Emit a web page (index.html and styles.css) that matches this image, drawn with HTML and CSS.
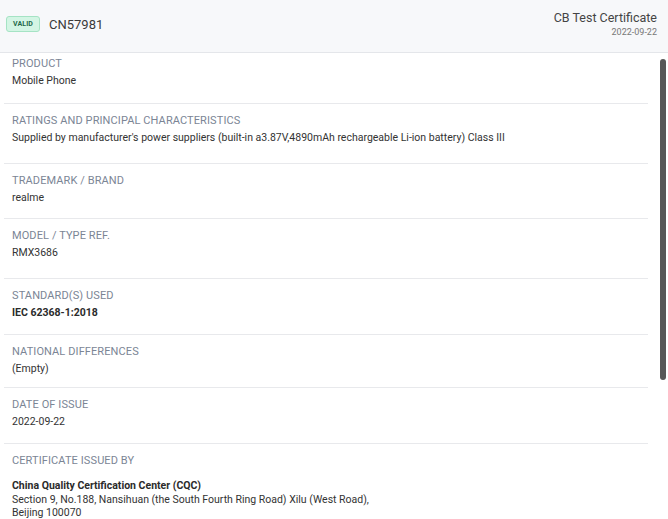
FILE: index.html
```html
<!DOCTYPE html>
<html>
<head>
<meta charset="utf-8">
<link rel="stylesheet" href="styles.css">
</head>
<body>
<div class="panel">
  <header class="head">
    <div class="head-left">
      <span class="badge">VALID</span>
      <span class="cert-no">CN57981</span>
    </div>
    <div class="head-right">
      <div class="cert-type">CB Test Certificate</div>
      <div class="cert-date">2022-09-22</div>
    </div>
  </header>
  <div class="body">
    <div class="list">
      <div class="row first pb-13">
        <div class="label">PRODUCT</div>
        <div class="value">Mobile Phone</div>
      </div>
      <div class="row pb-16">
        <div class="label">RATINGS AND PRINCIPAL CHARACTERISTICS</div>
        <div class="value">Supplied by manufacturer's power suppliers (built-in a3.87V,4890mAh rechargeable Li-ion battery) Class III</div>
      </div>
      <div class="row pb-11">
        <div class="label">TRADEMARK / BRAND</div>
        <div class="value">realme</div>
      </div>
      <div class="row pb-16">
        <div class="label">MODEL / TYPE REF.</div>
        <div class="value">RMX3686</div>
      </div>
      <div class="row pb-12">
        <div class="label">STANDARD(S) USED</div>
        <div class="value strong">IEC 62368-1:2018</div>
      </div>
      <div class="row pb-9">
        <div class="label">NATIONAL DIFFERENCES</div>
        <div class="value">(Empty)</div>
      </div>
      <div class="row pb-12">
        <div class="label">DATE OF ISSUE</div>
        <div class="value">2022-09-22</div>
      </div>
      <div class="row last">
        <div class="label">CERTIFICATE ISSUED BY</div>
        <div class="issuer">
          <div class="strong">China Quality Certification Center (CQC)</div>
          <div>Section 9, No.188, Nansihuan (the South Fourth Ring Road) Xilu (West Road),</div>
          <div>Beijing 100070</div>
        </div>
      </div>
    </div>
    <div class="thumb"></div>
  </div>
</div>
</body>
</html>
```

FILE: styles.css
```css
* { box-sizing: border-box; }
html, body {
  margin: 0;
  padding: 0;
  background: #ffffff;
  font-family: Roboto, "Liberation Sans", Arial, sans-serif;
  color: #333333;
}
.panel {
  width: 668px;
  height: 519px;
  overflow: hidden;
  display: flex;
  flex-direction: column;
}
.head {
  height: 53px;
  flex: none;
  background: #f7f8fa;
  border-bottom: 1px solid #e4e6ea;
  display: flex;
  justify-content: space-between;
  align-items: flex-start;
  padding: 0 11px 0 6px;
}
.head-left {
  display: flex;
  align-items: center;
  gap: 9px;
  height: 48px;
}
.badge {
  display: inline-flex;
  align-items: center;
  justify-content: center;
  width: 34px;
  height: 16px;
  background: #d3f5e4;
  border: 1px solid #a5e3c4;
  border-radius: 3px;
  font-size: 7px;
  font-weight: 700;
  color: #22694a;
  letter-spacing: 0.1px;
}
.cert-no {
  font-size: 13px;
  color: #3a3a3a;
}
.head-right {
  text-align: right;
  padding-top: 10px;
}
.cert-type {
  font-size: 12.5px;
  line-height: 15px;
  color: #444;
}
.cert-date {
  font-size: 9px;
  line-height: 12px;
  margin-top: 1px;
  color: #777;
}
.body {
  position: relative;
  flex: 1;
  min-height: 0;
}
.list {
  margin: 0 20px 0 4px;
}
.row {
  padding: 8px 8px 12px;
  border-bottom: 1px solid #e8e9ec;
}
.row.first { padding-top: 2px; }
.row.pb-16 { padding-bottom: 16px; }
.row.pb-13 { padding-bottom: 13px; }
.row.pb-12 { padding-bottom: 12px; }
.row.pb-11 { padding-bottom: 11px; }
.row.pb-9 { padding-bottom: 9px; }
.row.last { border-bottom: none; }
.label {
  font-size: 11px;
  line-height: 17px;
  color: #7b8595;
  letter-spacing: 0.1px;
}
.value {
  font-size: 10.5px;
  line-height: 18px;
  color: #333;
}
.strong { font-weight: 700; color: #2b2b2b; }
.issuer {
  margin-top: 10px;
  font-size: 10.5px;
  line-height: 13.5px;
  color: #333;
}
.thumb {
  position: absolute;
  left: 660px;
  top: 6px;
  width: 6px;
  height: 321px;
  background: #575757;
  border-radius: 3px;
}
```
